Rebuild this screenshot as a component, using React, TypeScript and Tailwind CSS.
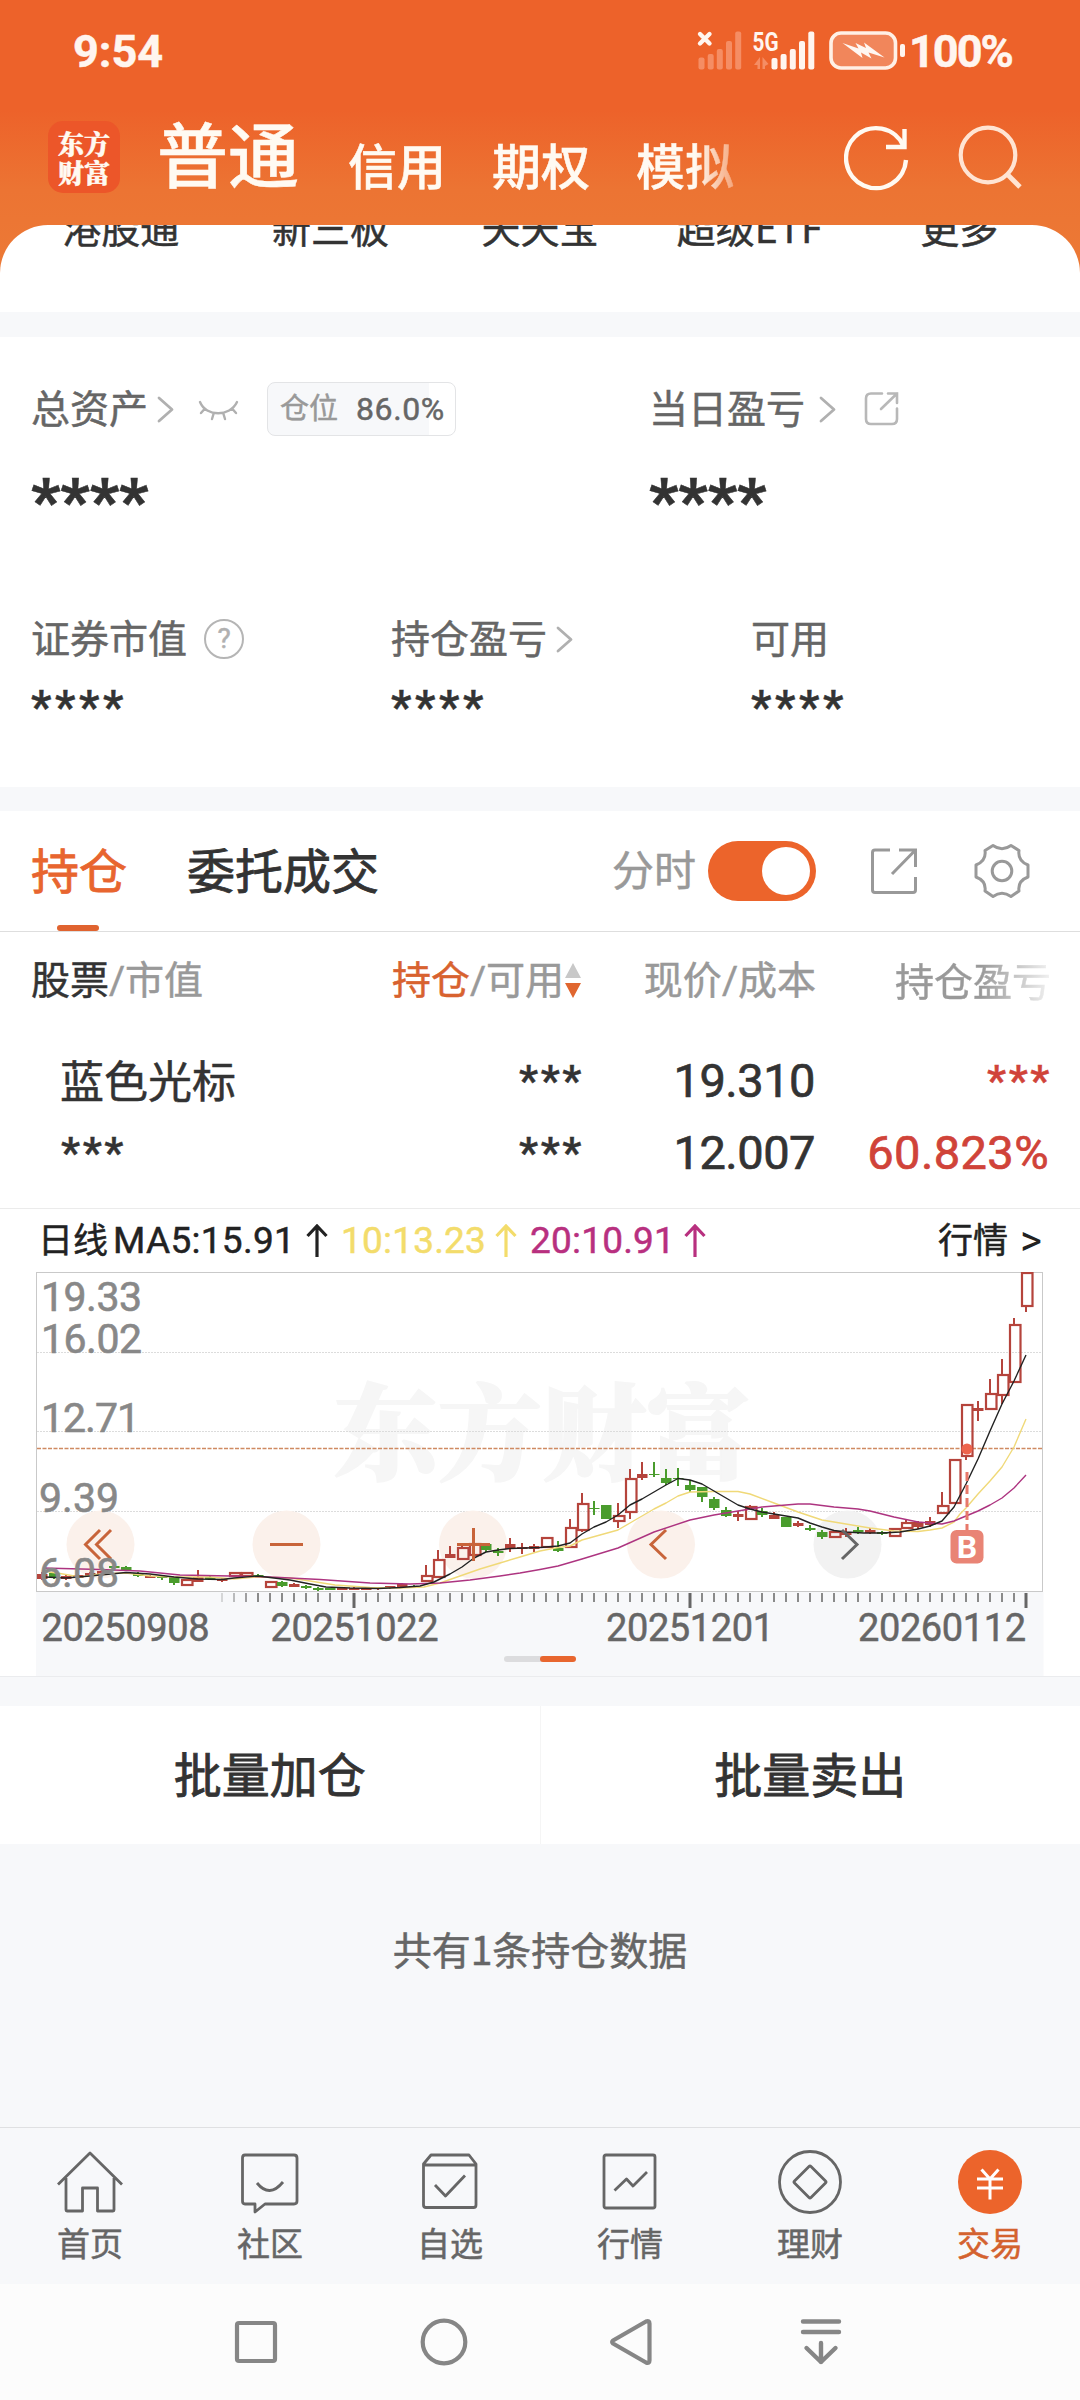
import React from 'react';

type CandleKind = 'up' | 'down' | 'flat';

// [x, kind, body top, body bottom, wick top, wick bottom]
type Candle = [number, CandleKind, number, number, number, number];

const RED = '#b5443c';
const GREEN = '#4a9c2d';

const candles: Candle[] = [
  [42, 'flat', 1574, 1579, 1572, 1580],
  [54, 'down', 1573, 1578, 1572, 1579],
  [66, 'flat', 1576, 1579, 1575, 1580],
  [78, 'flat', 1575, 1578, 1574, 1579],
  [90, 'flat', 1573, 1576, 1572, 1577],
  [102, 'flat', 1571, 1574, 1570, 1575],
  [114, 'down', 1566, 1568, 1564, 1569],
  [126, 'down', 1567, 1570, 1566, 1571],
  [138, 'down', 1573, 1576, 1572, 1577],
  [150, 'flat', 1576, 1578, 1575, 1578],
  [162, 'down', 1577, 1578, 1576, 1580],
  [174, 'down', 1577, 1583, 1577, 1585],
  [186, 'up', 1580, 1585, 1579, 1585],
  [198, 'flat', 1577, 1582, 1570, 1582],
  [210, 'down', 1577, 1579, 1576, 1580],
  [222, 'flat', 1579, 1581, 1578, 1582],
  [234, 'up', 1573, 1576, 1572, 1576],
  [246, 'up', 1573, 1576, 1572, 1576],
  [258, 'down', 1575, 1577, 1574, 1578],
  [270, 'up', 1582, 1587, 1581, 1587],
  [282, 'down', 1582, 1586, 1581, 1587],
  [294, 'flat', 1584, 1587, 1583, 1587],
  [306, 'down', 1586, 1588, 1585, 1589],
  [318, 'down', 1588, 1590, 1587, 1591],
  [330, 'down', 1588, 1590, 1588, 1590],
  [342, 'flat', 1588, 1590, 1588, 1590],
  [354, 'flat', 1588, 1590, 1587, 1590],
  [366, 'flat', 1588, 1590, 1587, 1590],
  [378, 'flat', 1587, 1589, 1587, 1590],
  [390, 'flat', 1586, 1588, 1586, 1589],
  [402, 'flat', 1584, 1587, 1583, 1588],
  [414, 'down', 1586, 1588, 1585, 1588],
  [426, 'up', 1576, 1581, 1565, 1581],
  [438, 'up', 1560, 1577, 1550, 1577],
  [450, 'flat', 1554, 1558, 1546, 1558],
  [462, 'up', 1548, 1559, 1546, 1559],
  [474, 'up', 1544, 1555, 1543, 1555],
  [486, 'down', 1544, 1550, 1543, 1552],
  [498, 'down', 1551, 1553, 1548, 1556],
  [510, 'flat', 1544, 1549, 1538, 1552],
  [522, 'flat', 1547, 1549, 1543, 1554],
  [534, 'flat', 1546, 1549, 1544, 1552],
  [546, 'up', 1538, 1547, 1537, 1547],
  [558, 'down', 1548, 1551, 1541, 1552],
  [570, 'up', 1528, 1547, 1519, 1547],
  [582, 'up', 1504, 1530, 1493, 1532],
  [594, 'down', 1508, 1509, 1501, 1515],
  [606, 'down', 1505, 1519, 1505, 1519],
  [618, 'up', 1516, 1521, 1503, 1528],
  [630, 'up', 1479, 1512, 1469, 1519],
  [642, 'flat', 1474, 1478, 1462, 1480],
  [654, 'down', 1474, 1475, 1462, 1477],
  [666, 'down', 1478, 1483, 1469, 1485],
  [678, 'down', 1478, 1479, 1468, 1486],
  [690, 'down', 1485, 1490, 1480, 1492],
  [702, 'down', 1487, 1497, 1487, 1502],
  [714, 'down', 1499, 1508, 1497, 1510],
  [726, 'down', 1510, 1516, 1507, 1517],
  [738, 'flat', 1514, 1517, 1511, 1521],
  [750, 'up', 1507, 1519, 1505, 1519],
  [762, 'down', 1511, 1515, 1508, 1517],
  [774, 'flat', 1515, 1519, 1512, 1519],
  [786, 'down', 1517, 1527, 1517, 1527],
  [798, 'flat', 1523, 1526, 1521, 1527],
  [810, 'down', 1528, 1530, 1525, 1531],
  [822, 'down', 1532, 1537, 1530, 1539],
  [834, 'up', 1532, 1537, 1531, 1538],
  [846, 'flat', 1532, 1535, 1528, 1537],
  [858, 'down', 1530, 1532, 1527, 1534],
  [870, 'flat', 1530, 1533, 1528, 1534],
  [882, 'down', 1532, 1534, 1531, 1535],
  [894, 'up', 1529, 1536, 1528, 1536],
  [906, 'up', 1523, 1528, 1520, 1529],
  [918, 'flat', 1522, 1527, 1521, 1529],
  [930, 'flat', 1521, 1525, 1517, 1527],
  [942, 'up', 1506, 1513, 1492, 1513],
  [954, 'up', 1460, 1503, 1459, 1503],
  [966, 'up', 1405, 1456, 1405, 1460],
  [978, 'flat', 1408, 1411, 1401, 1421],
  [990, 'up', 1394, 1409, 1379, 1409],
  [1002, 'up', 1375, 1395, 1359, 1404],
  [1014, 'up', 1325, 1382, 1318, 1382],
  [1026, 'up', 1273, 1306, 1273, 1312],
];

const ma5 =
  '45,1577 66,1578 90,1576 126,1572.5 150,1574 174,1577 198,1579 222,1579.5 234,1578 258,1576 290,1580 310,1584 326,1587 350,1588 378,1588.5 400,1587.5 420,1586 434,1582 450,1574 462,1567 474,1558 486,1552 498,1550 510,1548.5 540,1547.5 558,1546 570,1543 582,1534 594,1527 606,1522 618,1515 630,1505 642,1499 654,1492 666,1485 678,1478.5 690,1480 702,1484 714,1491 726,1498 738,1505 750,1509 762,1512 774,1514 786,1516 798,1518 810,1523 822,1527 834,1530.5 846,1532 864,1533 882,1533 900,1532 918,1529 930,1526 942,1521 954,1507 966,1484 978,1459 990,1431 1002,1404 1014,1381 1026,1355';
const ma10 =
  '42,1571 60,1573.5 80,1577 100,1574 126,1573 150,1576 174,1577 210,1577 234,1579 258,1577 290,1578 310,1581 335,1585 370,1587.5 400,1588 424,1587 440,1583 460,1576 480,1569 500,1563 520,1557 540,1551 558,1547.5 570,1546 582,1540 600,1535 618,1530 630,1523 654,1509 666,1503 678,1496 690,1492 714,1491.5 738,1491.5 750,1494 774,1503 798,1512 822,1520 846,1524 870,1528 894,1531 918,1531.5 930,1530 942,1528 954,1522 960,1514 966,1508 978,1494 990,1481 1002,1467 1014,1447 1026,1419';
const ma20 =
  '43,1568 100,1569.5 140,1571 180,1575 230,1576 270,1577 320,1579.5 370,1583 410,1584 440,1583 470,1580 500,1576 520,1573 540,1569.5 558,1566 582,1559 618,1548 654,1532 690,1520 714,1515 738,1511 762,1507 798,1504 810,1504 834,1507 858,1509 870,1511 894,1517 918,1522 942,1524 954,1521 966,1516 978,1511 990,1505 1002,1498 1014,1488 1026,1475';

const priceLabels = [
  { text: '19.33', x: 41, y: 1310.5, width: 101 },
  { text: '16.02', x: 41, y: 1352.5, width: 101 },
  { text: '12.71', x: 41, y: 1431.5, width: 99 },
  { text: '9.39', x: 39, y: 1511.5, width: 80 },
  { text: '6.08', x: 39, y: 1586.5, width: 80 },
];

const dateLabels = [
  { text: '20250908', x: 41.5 },
  { text: '20251022', x: 270.5 },
  { text: '20251201', x: 606 },
  { text: '20260112', x: 858 },
];

const ticks = Array.from({ length: 68 }, (_, i) => 222 + i * 12);

const shortcuts = ['港股通', '新三板', '天天宝', '超级ETF', '更多'];

const ChevronRight: React.FC = () => (
  <svg className="h-[28px] w-[18px]" viewBox="0 0 18 28" fill="none" stroke="#b0b0b0" strokeWidth="2.8" strokeLinecap="round" strokeLinejoin="round">
    <path d="M2 3 L15 14.5 L2 26" />
  </svg>
);

const StatusBar: React.FC = () => (
  <div className="flex h-[102px] items-center pl-[73px] pr-[66px] text-[#fff5ef]">
    <span className="font-[Roboto] text-[45px] font-bold leading-none">9:54</span>
    <svg className="ml-auto h-[60px] w-[215px]" viewBox="693 21 215 60">
      <g fill="#f58d64">
        <rect x="698.5" y="57.5" width="6" height="12" rx="2" />
        <rect x="707.7" y="54" width="6" height="15.5" rx="2" />
        <rect x="716.8" y="49" width="6" height="20.5" rx="2" />
        <rect x="726" y="41" width="6" height="28.5" rx="2" />
        <rect x="735.2" y="31.5" width="6" height="38" rx="2" />
        <path d="M754 65 L760 57 V69 H757.5 V65 Z M762.5 57 L768.5 64 L765 66 V69 H762.5 Z" />
      </g>
      <path d="M700 34 L709.5 43.5 M709.5 34 L700 43.5" stroke="#fff5ef" strokeWidth="4.4" strokeLinecap="round" />
      <g fill="#fff5ef">
        <text x="752.5" y="51" fontFamily="Roboto" fontSize="26" fontWeight="700" textLength="26" lengthAdjust="spacingAndGlyphs">5G</text>
        <rect x="771.5" y="58" width="6" height="11.5" rx="2" />
        <rect x="780.6" y="54" width="6" height="15.5" rx="2" />
        <rect x="789.8" y="49" width="6" height="20.5" rx="2" />
        <rect x="799" y="41" width="6" height="28.5" rx="2" />
        <rect x="808.3" y="31.5" width="6" height="38" rx="2" />
        <rect x="900" y="44" width="5" height="13" rx="2" />
        <path d="M842.5 43 L858.5 48.5 L855.5 43 L866 48 L864 42.5 L884.5 57.5 L868.5 52.5 L871.5 58.5 L861 52.5 L862.5 58 Z" />
      </g>
      <rect x="831" y="33" width="64.5" height="35" rx="10" fill="#fff" fillOpacity="0.23" stroke="#fff0e6" strokeWidth="3.6" />
    </svg>
    <span className="ml-[1px] w-[105px] whitespace-nowrap font-[Roboto] text-[45px] font-bold leading-none tracking-[-2px]">100%</span>
  </div>
);

const Header: React.FC = () => (
  <header className="h-[225px] shrink-0">
    <StatusBar />
    <div className="flex h-[123px] items-end pl-[48px] pr-[56px] text-[#fffaf2]">
      <div className="mb-[32px] flex h-[72px] w-[72px] flex-col items-center justify-center rounded-[15px] bg-[#ec5629] font-['Noto_Serif_CJK_SC','Noto_Sans_CJK_SC',serif] text-[26px] font-black leading-[29px]">
        <span>东方</span>
        <span>财富</span>
      </div>
      <span className="mb-[32px] ml-[37px] text-[71px] font-medium leading-[84px]">普通</span>
      <div className="mb-[31px] ml-[49px] flex gap-[46px] text-[49px] font-medium leading-[60px]">
        <span>信用</span>
        <span>期权</span>
        <span className="bg-[linear-gradient(90deg,#fffaf2_60%,#f5a67c_100%)] bg-clip-text text-transparent">模拟</span>
      </div>
      <svg className="mb-[29px] ml-auto h-[76px] w-[180px]" viewBox="843 120 180 76" fill="none">
        <path d="M905 160 A30 30 0 1 1 902.500 146" stroke="#fffaf2" strokeWidth="4.4" />
        <path d="M903.5 129 V147 H885" stroke="#fffaf2" strokeWidth="4.4" />
        <circle cx="987" cy="155" r="27.300" stroke="#ffe4d3" strokeWidth="4.2" />
        <path d="M1006 174 L1019 187" stroke="#ffe4d3" strokeWidth="4.8" />
      </svg>
    </div>
  </header>
);

const Assets: React.FC = () => (
  <section className="h-[450px] shrink-0 bg-white pl-[31px] text-[39px] text-[#666]">
    <div className="flex pt-[45px]">
      <div className="w-[618px]">
        <div className="flex h-[54px] items-center">
          <span className="-mt-[6px] leading-none">总资产</span>
          <span className="ml-[9px]"><ChevronRight /></span>
          <svg className="ml-[23px] h-[24px] w-[42px]" viewBox="0 0 42 24" fill="none" stroke="#b0b0b0" strokeWidth="2.4" strokeLinecap="round">
            <path d="M2 5 C8 20 32 20 39 5 M6.500 12 L3 16 M15.500 17 L14 22 M25.500 17 L27 22 M34.500 12 L38 16" />
          </svg>
          <div className="ml-[27px] flex h-[54px] w-[189px] items-center rounded-[8px] border border-[#e3e4e6] bg-[linear-gradient(90deg,#f7f8fa_86%,#fff_86%)] pl-[12px]">
            <span className="-mt-[6px] text-[29px] leading-none text-[#999]">仓位</span>
            <span className="ml-[18px] font-[Roboto] text-[32px] leading-none tracking-[0.6px]">86.0%</span>
          </div>
        </div>
        <div className="mt-[36px] font-[Roboto] text-[63px] font-black leading-[60px] text-[#333]">****</div>
      </div>
      <div>
        <div className="flex h-[54px] items-center">
          <span className="-mt-[6px] leading-none">当日盈亏</span>
          <span className="ml-[14px]"><ChevronRight /></span>
          <svg className="ml-[27px] h-[36px] w-[36px]" viewBox="0 0 36 36" fill="none" stroke="#b8b8b8" strokeWidth="2.6" strokeLinecap="round">
            <path d="M18 2.500 H7 Q2 2.500 2 7.500 V28 Q2 33 7 33 H28 Q33 33 33 28 V17.500 M24 2.500 H33 V12 M33 2.500 L17 18" />
          </svg>
        </div>
        <div className="mt-[36px] font-[Roboto] text-[63px] font-black leading-[60px] text-[#333]">****</div>
      </div>
    </div>
    <div className="mt-[80px] flex">
      <div className="w-[360px]">
        <div className="flex h-[54px] items-center">
          <span className="-mt-[6px] leading-none">证券市值</span>
          <span className="ml-[17px] flex h-[40px] w-[40px] items-center justify-center rounded-full border-[2.5px] border-[#b5b5b5] font-[Roboto] text-[28px] leading-none text-[#b0b0b0]">?</span>
        </div>
        <div className="mt-[18px] font-[Roboto] text-[46px] font-medium leading-[46px] tracking-[3.6px] text-[#333]">****</div>
      </div>
      <div className="w-[360px]">
        <div className="flex h-[54px] items-center">
          <span className="-mt-[6px] leading-none">持仓盈亏</span>
          <span className="ml-[9px]"><ChevronRight /></span>
        </div>
        <div className="mt-[18px] font-[Roboto] text-[46px] font-medium leading-[46px] tracking-[3.6px] text-[#333]">****</div>
      </div>
      <div>
        <div className="flex h-[54px] items-center">
          <span className="-mt-[6px] leading-none">可用</span>
        </div>
        <div className="mt-[18px] font-[Roboto] text-[46px] font-medium leading-[46px] tracking-[3.6px] text-[#333]">****</div>
      </div>
    </div>
  </section>
);

const PositionTabs: React.FC = () => (
  <div className="flex h-[121px] shrink-0 items-center border-b border-[#dedede] bg-white pl-[31px] pr-[50px] text-[48px] [-webkit-text-stroke-width:0.8px]">
    <div className="relative flex h-full items-center text-[#e8652f]">
      <span className="-mt-[7px] leading-none">持仓</span>
      <span className="absolute bottom-0 left-[26px] h-[6px] w-[42px] rounded-full bg-[#e0632f]" />
    </div>
    <span className="-mt-[7px] ml-[60px] leading-none">委托成交</span>
    <span className="-mt-[6px] ml-auto text-[42px] leading-none text-[#999] [-webkit-text-stroke-width:0.5px]">分时</span>
    <div className="ml-[12px] flex h-[60px] w-[108px] items-center justify-end rounded-full bg-[#ec642b] pr-[6px]">
      <span className="h-[48px] w-[48px] rounded-full bg-white" />
    </div>
    <svg className="ml-[54px] h-[48px] w-[48px]" viewBox="0 0 48 48" fill="none" stroke="#999" strokeWidth="3">
      <path d="M20 3 H5 Q2.500 3 2.500 5.500 V43 Q2.500 45.500 5 45.500 H43 Q45.500 45.500 45.500 43 V30 M29 3 H45.500 V20 M44 4.500 L22 27" />
    </svg>
    <svg className="ml-[56px] h-[56px] w-[56px]" viewBox="0 0 56 56" fill="none" stroke="#999" strokeWidth="3" strokeLinejoin="round">
      <path d="M19 2.500 Q28 9 37 2.500 L45 7.500 Q43.500 18 54 22 V34 Q43.500 38 45 48 L37 53.500 Q28 47 19 53.500 L11 48 Q12.500 38 2 34 V22 Q12.500 18 11 7.500 Z" />
      <circle cx="28" cy="28" r="9.800" />
    </svg>
  </div>
);

const PositionTable: React.FC = () => (
  <div className="h-[277px] shrink-0 border-b border-[#ebebeb] bg-white pl-[31px] pr-[31px]">
    <div className="flex h-[94px] items-center text-[39px] leading-none text-[#999]">
      <span className="w-[361px]"><span className="text-[#333]">股票</span><span className="font-[Roboto]">/</span>市值</span>
      <span><span className="text-[#d8622f]">持仓</span><span className="font-[Roboto]">/</span>可用</span>
      <svg className="mt-[3px] h-[36px] w-[18px]" viewBox="0 0 18 36">
        <path d="M9 0 L17 15 H1 Z" fill="#c8c8c8" />
        <path d="M9 35 L17 20 H1 Z" fill="#e0662f" />
      </svg>
      <span className="ml-auto">现价<span className="font-[Roboto]">/</span>成本</span>
      <span className="-mr-[2px] ml-[79px] bg-[linear-gradient(90deg,#999_55%,#eee_98%)] bg-clip-text leading-[50px] text-transparent">持仓盈亏</span>
    </div>
    <div className="grid h-[72px] grid-cols-[300px_250px_234px_234px] items-center pt-[31px] text-[#333]">
      <span className="-mt-[4px] pl-[29px] text-[44px] leading-none">蓝色光标</span>
      <span className="-mr-[3px] -mt-[1px] text-right font-[Roboto] text-[43px] font-medium leading-none tracking-[2.6px]">***</span>
      <span className="text-right font-[Roboto] text-[47px] leading-none tracking-[-0.5px] [-webkit-text-stroke-width:0.7px]">19.310</span>
      <span className="-mr-[3px] -mt-[1px] text-right font-[Roboto] text-[43px] font-medium leading-none tracking-[2.6px] text-[#d04339]">***</span>
    </div>
    <div className="grid h-[72px] grid-cols-[300px_250px_234px_234px] items-center pt-[31px] text-[#333]">
      <span className="pl-[30px] font-[Roboto] text-[43px] font-medium leading-none tracking-[2.6px]">***</span>
      <span className="-mr-[3px] text-right font-[Roboto] text-[43px] font-medium leading-none tracking-[2.6px]">***</span>
      <span className="text-right font-[Roboto] text-[47px] leading-none tracking-[-0.5px] [-webkit-text-stroke-width:0.7px]">12.007</span>
      <span className="text-right font-[Roboto] text-[47px] leading-none tracking-[0.4px] text-[#d04339] [-webkit-text-stroke-width:0.7px]">60.823%</span>
    </div>
  </div>
);

const UpArrow: React.FC = () => (
  <svg className="h-[34px] w-[22px]" viewBox="0 0 22 34" fill="none" stroke="currentColor" strokeWidth="3.2">
    <path d="M11 2 V33 M1.500 12 L11 2 L20.500 12" />
  </svg>
);

const MaLegend: React.FC = () => (
  <div className="flex h-[63px] shrink-0 items-center bg-white pl-[38px] pr-[38px] text-[35px] leading-none text-[#222]">
    <span className="-mt-[7px]">日线</span>
    <span className="ml-[5px] w-[180px] whitespace-nowrap font-[Roboto] text-[37px] tracking-[0.3px]">MA5:15.91</span>
    <span className="ml-[13px]"><UpArrow /></span>
    <span className="ml-[13px] w-[150px] whitespace-nowrap font-[Roboto] text-[37px] tracking-[0.2px] text-[#f3dc6b]">10:13.23</span>
    <span className="ml-[4px] text-[#f3dc6b]"><UpArrow /></span>
    <span className="ml-[13px] w-[150px] whitespace-nowrap font-[Roboto] text-[37px] tracking-[0.2px] text-[#b8307f]">20:10.91</span>
    <span className="ml-[4px] text-[#b8307f]"><UpArrow /></span>
    <span className="-mt-[7px] ml-auto">行情</span>
    <span className="ml-[12px] font-[Roboto] text-[42px] [-webkit-text-stroke-width:0px]">&gt;</span>
  </div>
);

const KLineChart: React.FC = () => (
  <div className="h-[404px] shrink-0 bg-white pl-[36px] pr-[36px]">
    <svg className="block h-[404px] w-[1008px]" viewBox="36 1272 1008 404" fontFamily="Roboto">
      <rect x="36" y="1592" width="1007.500" height="84" fill="#f7f8fa" />
      <text x="334" y="1472" fontFamily="'Noto Serif CJK SC', 'Noto Sans CJK SC', serif" fontSize="104" fontWeight="900" fill="#f6f6f6" stroke="#f6f6f6" strokeWidth="2">东方财富</text>
      <rect x="36.500" y="1272.500" width="1006" height="319" fill="none" stroke="#c9c9c9" />
      <g stroke="#dcdcdc" strokeDasharray="2 1">
        <path d="M37 1352.500 H1042" />
        <path d="M37 1431.500 H1042" />
        <path d="M37 1511.500 H1042" />
      </g>
      <path d="M37 1448.500 H1042" stroke="#cf8a62" strokeWidth="1.5" strokeDasharray="4 1.5" />
      <g fill="#fbf1eb">
        <circle cx="100.500" cy="1544.500" r="34" />
        <circle cx="286.500" cy="1544.500" r="34" />
        <circle cx="473" cy="1544.500" r="34" />
        <circle cx="661" cy="1544.500" r="34" />
      </g>
      <circle cx="847.500" cy="1544.500" r="34" fill="#f2f2f2" />

      {candles.map(([x, kind, top, bottom, high, low]) => {
        const color = kind === 'down' ? GREEN : RED;
        return (
          <g key={x}>
            {kind === 'up' ? (
              <>
                <path d={`M${x} ${high} V${top} M${x} ${bottom} V${low}`} stroke={color} strokeWidth="2" />
                <rect x={x - 4} y={top} width="10.500" height={bottom - top} fill="none" stroke={color} strokeWidth="2.2" />
              </>
            ) : (
              <>
                <path d={`M${x} ${high} V${low}`} stroke={color} strokeWidth="2" />
                <rect x={x - 5} y={top} width="10.500" height={bottom - top} fill={color} />
              </>
            )}
          </g>
        );
      })}

      <g fill="none" strokeWidth="1.4" strokeLinejoin="round">
        <polyline points={ma10} stroke="#f0d978" />
        <polyline points={ma20} stroke="#ad3480" />
        <polyline points={ma5} stroke="#222" />
      </g>

      <g fill="none" stroke="#c8643a" strokeWidth="3">
        <path d="M100 1530 L85.500 1544.500 L100 1559 M111 1530 L96.500 1544.500 L111 1559" />
        <path d="M270 1544.500 H303" />
        <path d="M457 1544.500 H490 M473.500 1528 V1561" />
        <path d="M666 1530 L651 1544.500 L666 1559" />
        <path d="M842 1530 L857 1544.500 L842 1559" stroke="#666" />
      </g>

      <path d="M967 1472 V1530" stroke="#e8796b" strokeWidth="3" strokeDasharray="9 4" />
      <circle cx="967" cy="1449" r="5.500" fill="#ee644c" />
      <rect x="950.500" y="1530" width="33" height="33.500" rx="6" fill="#e98475" />
      <text x="967" y="1558" textAnchor="middle" fontSize="32" fontWeight="700" fill="#fff">B</text>

      <g fill="#888" fontSize="41" stroke="#888" strokeWidth="0.6">
        {priceLabels.map((label) => (
          <text key={label.text} x={label.x} y={label.y} textLength={label.width}>{label.text}</text>
        ))}
      </g>

      {ticks.map((x, i) => {
        const major = x === 354 || x === 690 || x === 1026;
        return (
          <path
            key={x}
            d={`M${x} 1593 V${major ? 1608 : 1602}`}
            stroke={major ? '#666' : '#8a8a8a'}
            strokeWidth={major ? 3 : 2}
            opacity={i < 3 ? 0.3 + i * 0.25 : 1}
          />
        );
      })}
      <g fill="#666" fontSize="38" stroke="#666" strokeWidth="0.5">
        {dateLabels.map((label) => (
          <text key={label.text} x={label.x} y="1640.500" textLength="168">{label.text}</text>
        ))}
      </g>
      <rect x="504" y="1656" width="40" height="6" rx="3" fill="#dcdcde" />
      <rect x="540" y="1656" width="36" height="6" rx="3" fill="#e8662f" />
    </svg>
  </div>
);

const tabs: { label: string; icon: React.ReactNode }[] = [
  {
    label: '首页',
    icon: <path d="M2 34.500 L34 3 L66 34.500 M10 28 V60 Q10 61 11 61 H26.500 V38 H41.500 V61 H57 Q58 61 58 60 V28" />,
  },
  {
    label: '社区',
    icon: <path d="M9 5 H58 Q61 5 61 8 V51 Q61 54 58 54 H29 L19 62 V54 H9 Q6.500 54 6.500 51 V8 Q6.500 5 9 5 Z M21 33 Q33.500 48.500 47 32" />,
  },
  {
    label: '自选',
    icon: <path d="M8 15 H60 V55 Q60 57.500 57.500 57.500 H10 Q7.500 57.500 7.500 55 V14 L15 5 H53 L60 14 V18 M19 35 L29.500 46 L49 25.500" />,
  },
  {
    label: '行情',
    icon: <path d="M10 5 H57 Q59 5 59 7 V56 Q59 58 57 58 H10 Q8 58 8 56 V7 Q8 5 10 5 Z M18.500 40.500 L30.500 29 L37 36 L51 22" />,
  },
  {
    label: '理财',
    icon: (
      <>
        <circle cx="34" cy="32" r="30.500" />
        <path d="M33 16.500 Q34 15.500 35 16.500 L49.500 31 Q50.500 32 49.500 33 L35 47.500 Q34 48.500 33 47.500 L18.500 33 Q17.500 32 18.500 31 Z" />
      </>
    ),
  },
];

const BottomNav: React.FC = () => (
  <nav className="grid h-[157px] shrink-0 grid-cols-6 border-t border-[#dfe0e2] bg-[#f7f8fa] pt-[22px] text-[33px] text-[#666]">
    {tabs.map((tab) => (
      <div key={tab.label} className="flex flex-col items-center">
        <svg className="h-[66px] w-[68px]" viewBox="0 0 68 66" fill="none" stroke="#666" strokeWidth="2.8" strokeLinejoin="round">
          {tab.icon}
        </svg>
        <span className="mt-[8px] leading-[36px]">{tab.label}</span>
      </div>
    ))}
    <div className="flex flex-col items-center text-[#d4622f]">
      <svg className="h-[66px] w-[68px]" viewBox="0 0 68 66" fill="none" stroke="#fff" strokeWidth="3">
        <circle cx="34" cy="32" r="32" fill="#ec642b" stroke="none" />
        <path d="M25.500 19.500 L34 29 L42.500 19.500 M21 29 H47 M21 38 H47 M34 29 V49.500" />
      </svg>
      <span className="mt-[8px] leading-[36px]">交易</span>
    </div>
  </nav>
);

const SystemNav: React.FC = () => (
  <div className="flex h-[116px] shrink-0 items-center gap-[128px] bg-[#fcfcfc] pl-[226px]">
    <svg className="h-[60px] w-[60px]" viewBox="0 0 60 60" fill="none" stroke="#868686" strokeWidth="4.2">
      <rect x="11" y="11" width="38" height="38" rx="2" />
    </svg>
    <svg className="h-[60px] w-[60px]" viewBox="0 0 60 60" fill="none" stroke="#868686" strokeWidth="4.2">
      <circle cx="30" cy="30" r="21.300" />
    </svg>
    <svg className="h-[60px] w-[60px]" viewBox="0 0 60 60" fill="none" stroke="#868686" strokeWidth="4.2" strokeLinejoin="round">
      <path d="M11 28.500 L44 9.500 Q47.500 8 47.500 11.500 V48.500 Q47.500 52 44 50.500 L11 31.500 Q9.500 30 11 28.500 Z" />
    </svg>
    <svg className="h-[60px] w-[60px]" viewBox="0 0 60 60" fill="none" stroke="#868686" strokeWidth="4.4" strokeLinecap="round" strokeLinejoin="round">
      <path d="M13 9.500 H49 M13 20 H49 M31 31 V50 M16.500 36 L31 50 L45.500 36" />
    </svg>
  </div>
);

const App: React.FC = () => {
  return (
    <div className="flex h-[2400px] w-[1080px] flex-col overflow-hidden bg-[#f7f8fa] bg-[linear-gradient(180deg,#ed622a_0px,#ed622a_110px,#ec7433_190px,#ec7a36_280px)] bg-[length:1080px_280px] bg-no-repeat font-['Noto_Sans_CJK_SC',sans-serif] text-[#333] [-webkit-text-stroke-width:0.5px]">
      <Header />
      <div className="h-[87px] shrink-0 overflow-hidden rounded-t-[48px] bg-white px-4">
        <div className="-mt-[19px] grid grid-cols-5 text-center text-[39px] leading-[40px]">
          {shortcuts.map((name) => (
            <span key={name}>{name}</span>
          ))}
        </div>
      </div>
      <div className="h-[25px] shrink-0 bg-[#f7f8fa]" />
      <Assets />
      <div className="h-[24px] shrink-0 bg-[#f7f8fa]" />
      <PositionTabs />
      <PositionTable />
      <MaLegend />
      <KLineChart />
      <div className="h-[30px] shrink-0 border-t border-[#ebecee] bg-[#f7f8fa]" />
      <div className="flex h-[138px] shrink-0 items-center bg-white text-center text-[48px] leading-none [-webkit-text-stroke-width:0.8px]">
        <span className="-mt-[6px] flex-1">批量加仓</span>
        <span className="h-full w-px bg-[#f5f5f5]" />
        <span className="-mt-[6px] flex-1">批量卖出</span>
      </div>
      <div className="flex-1 bg-[#f7f8fa] pt-[84px] text-center text-[39px] leading-[40px] text-[#666]">共有1条持仓数据</div>
      <BottomNav />
      <SystemNav />
    </div>
  );
};

export default App;
